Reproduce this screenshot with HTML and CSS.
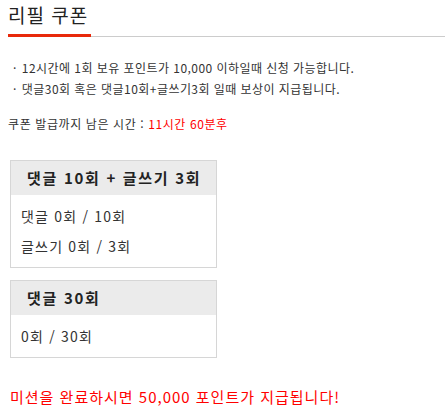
FILE: index.html
```html
<!DOCTYPE html>
<html lang="ko">
<head>
<meta charset="utf-8">
<link rel="stylesheet" href="styles.css">
</head>
<body>
<div class="page">
  <div class="title-bar">
    <h1 class="title">리필 쿠폰</h1>
  </div>
  <ul class="notes">
    <li>12시간에 1회 보유 포인트가 10,000 이하일때 신청 가능합니다.</li>
    <li>댓글30회 혹은 댓글10회+글쓰기3회 일때 보상이 지급됩니다.</li>
  </ul>
  <p class="remain">쿠폰 발급까지 남은 시간 : <span class="red">11시간 60분후</span></p>
  <div class="box">
    <div class="box-head">댓글 10회 + 글쓰기 3회</div>
    <div class="box-body">
      <div class="row">댓글 0회 / 10회</div>
      <div class="row">글쓰기 0회 / 3회</div>
    </div>
  </div>
  <div class="box">
    <div class="box-head">댓글 30회</div>
    <div class="box-body">
      <div class="row">0회 / 30회</div>
    </div>
  </div>
  <p class="reward">미션을 완료하시면 50,000 포인트가 지급됩니다!</p>
</div>
</body>
</html>
```

FILE: styles.css
```css
html, body {
  margin: 0;
  padding: 0;
  background: #fff;
}
body {
  font-family: "Noto Sans CJK KR", "Noto Sans", sans-serif;
  color: #333;
}
.page {
  padding: 0 0 0 8px;
}
.title-bar {
  border-bottom: 1px solid #ccc;
  display: flex;
  padding-top: 2px;
}
.title {
  margin: 0 0 -1px 0;
  font-size: 19px;
  font-weight: normal;
  line-height: 26px;
  padding-bottom: 6px;
  width: 83px;
  border-bottom: 3px solid #e8290b;
  color: #222;
  letter-spacing: 1px;
}
.notes {
  list-style: none;
  margin: 20px 0 0 0;
  padding: 0 0 0 5px;
  font-size: 12px;
  line-height: 21px;
  letter-spacing: 0.45px;
  color: #333;
}
.notes li::before {
  content: "·";
  margin-right: 5px;
}
.remain {
  margin: 15px 0 0 0;
  font-size: 12px;
  line-height: 20px;
  letter-spacing: 0.6px;
  color: #333;
}
.red {
  color: #f00;
}
.box {
  width: 205px;
  margin: 26px 0 0 2px;
  border: 1px solid #d6d6d6;
}
.box + .box {
  margin-top: 12px;
}
.box-head {
  background: #ebebeb;
  font-size: 15px;
  font-weight: bold;
  line-height: 34px;
  padding-left: 16px;
  letter-spacing: 1.7px;
  color: #222;
}
.box-body {
  padding: 6px 0 6px 10px;
}
.row {
  font-size: 14px;
  line-height: 30px;
  letter-spacing: 1.2px;
  color: #333;
}
.reward {
  margin: 29px 0 0 2px;
  font-size: 15px;
  line-height: 20px;
  letter-spacing: 1px;
  color: #f00;
}
```
